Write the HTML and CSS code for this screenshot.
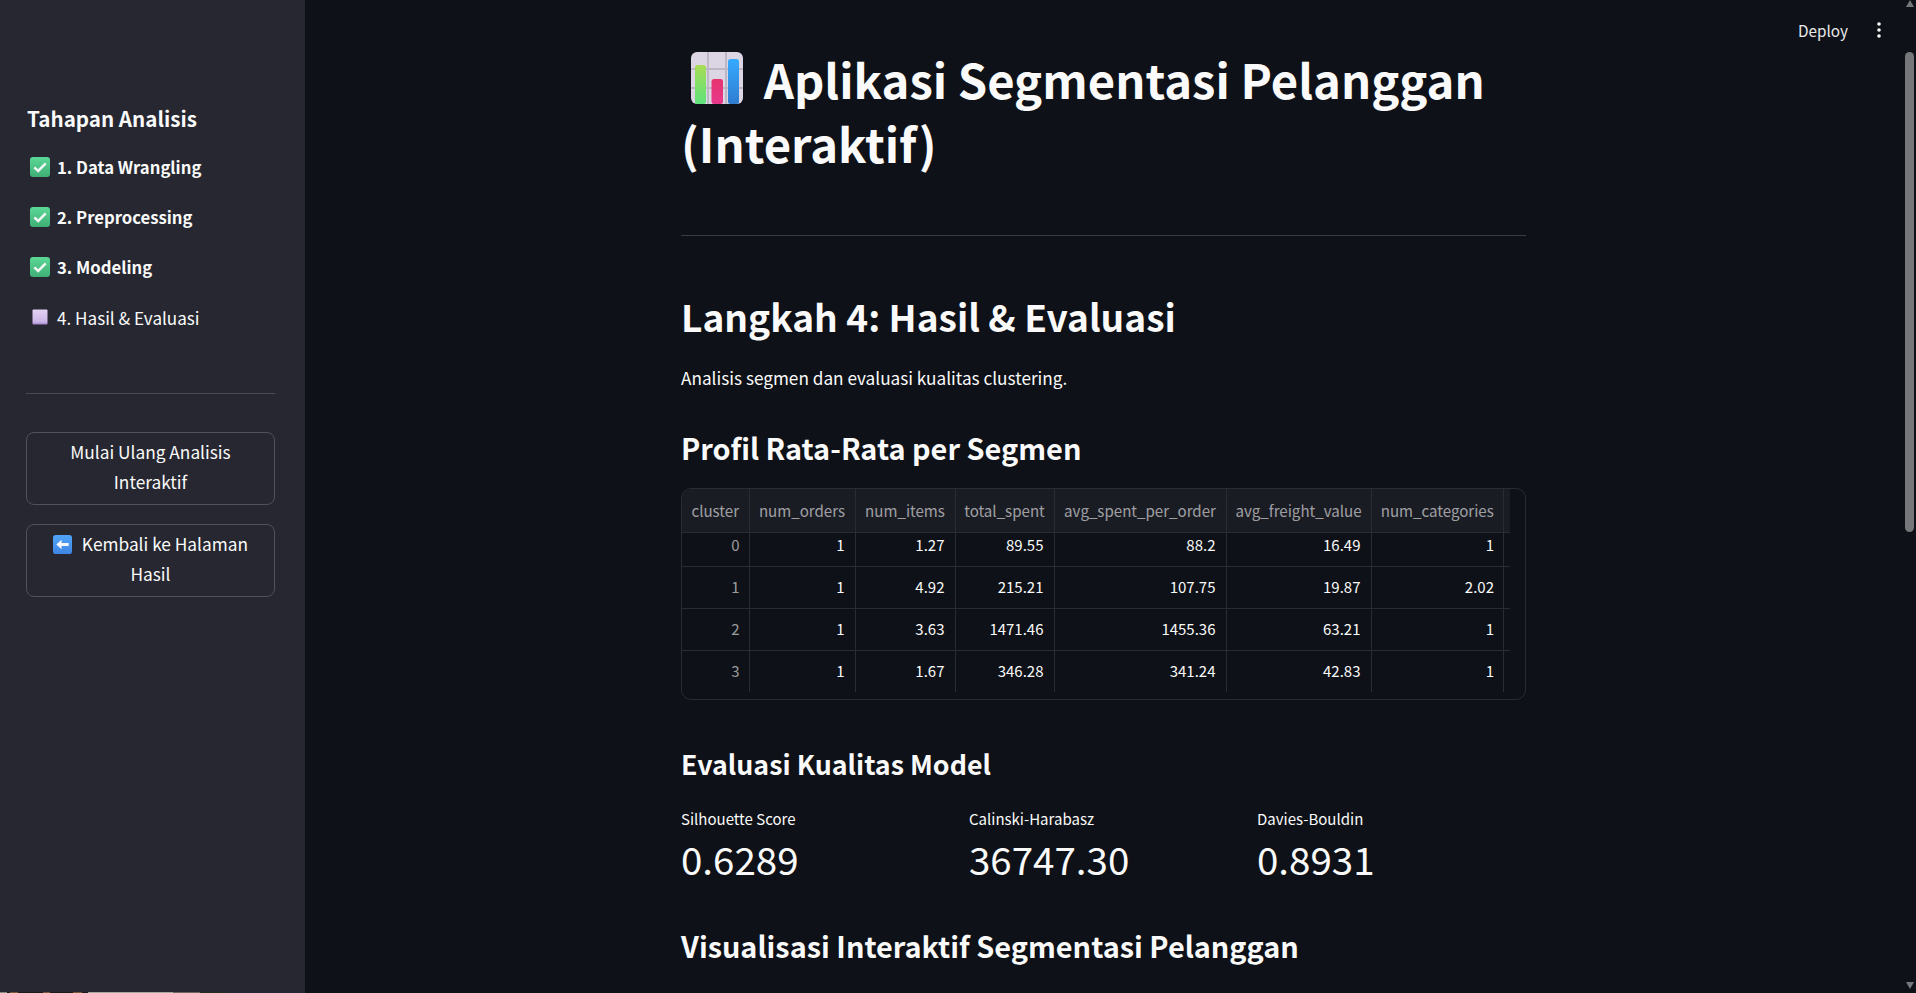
FILE: index.html
```html
<!DOCTYPE html>
<html lang="en">
<head>
  <meta charset="UTF-8">
  <meta name="viewport" content="width=device-width, initial-scale=1.0">
  <title>Aplikasi Segmentasi Pelanggan</title>
  <link rel="stylesheet" href="styles.css">
</head>
<body>
  <aside class="sidebar">
    <h2 class="side-title">Tahapan Analisis</h2>
    <ul class="steps">
      <li class="step done">
        <svg class="step-icon" viewBox="0 0 20 20"><defs><linearGradient id="green" x1="0" y1="0" x2="0" y2="1"><stop offset="0" stop-color="#5bd896"/><stop offset="1" stop-color="#3fae75"/></linearGradient></defs><rect width="20" height="20" rx="3" fill="url(#green)"/><path d="M4.3 10.3l3.9 3.7 7.5-7.6" fill="none" stroke="#f1f6f4" stroke-width="2.5"/></svg>
        1. Data Wrangling
      </li>
      <li class="step done">
        <svg class="step-icon" viewBox="0 0 20 20"><rect width="20" height="20" rx="3" fill="url(#green)"/><path d="M4.3 10.3l3.9 3.7 7.5-7.6" fill="none" stroke="#f1f6f4" stroke-width="2.5"/></svg>
        2. Preprocessing
      </li>
      <li class="step done">
        <svg class="step-icon" viewBox="0 0 20 20"><rect width="20" height="20" rx="3" fill="url(#green)"/><path d="M4.3 10.3l3.9 3.7 7.5-7.6" fill="none" stroke="#f1f6f4" stroke-width="2.5"/></svg>
        3. Modeling
      </li>
      <li class="step">
        <svg class="step-icon" viewBox="0 0 20 20"><defs><linearGradient id="lilac" x1="0" y1="0" x2="0" y2="1"><stop offset="0" stop-color="#e2d3f2"/><stop offset="0.8" stop-color="#cdb6e6"/><stop offset="1" stop-color="#a888cf"/></linearGradient></defs><rect x="2.5" y="2.5" width="15" height="15" rx="1" fill="url(#lilac)"/></svg>
        4. Hasil &amp; Evaluasi
      </li>
    </ul>
    <hr class="side-rule">
    <button class="side-btn">Mulai Ulang Analisis Interaktif</button>
    <button class="side-btn">
      <svg class="btn-icon" viewBox="0 0 20 20"><defs><linearGradient id="blue" x1="0" y1="0" x2="0" y2="1"><stop offset="0" stop-color="#50a4f8"/><stop offset="1" stop-color="#3f86e4"/></linearGradient></defs><rect width="20" height="20" rx="3" fill="url(#blue)"/><path d="M3.5 10l5.5-5v3.5h7.5v3H9V15z" fill="#f4f6fc"/></svg>
      Kembali ke Halaman Hasil
    </button>
  </aside>

  <main class="main">
    <div class="toolbar">
      <span class="deploy">Deploy</span>
      <svg class="dots" viewBox="0 0 6 18"><circle cx="3" cy="3" r="1.8"/><circle cx="3" cy="9" r="1.8"/><circle cx="3" cy="15" r="1.8"/></svg>
    </div>

    <div class="content">
      <h1 class="title">
        <svg class="title-icon" viewBox="0 0 52 52">
          <defs>
            <linearGradient id="bar-green" x1="0" y1="0" x2="0" y2="1"><stop offset="0" stop-color="#a8dc55"/><stop offset="1" stop-color="#5ee27c"/></linearGradient>
            <linearGradient id="bar-pink" x1="0" y1="0" x2="0" y2="1"><stop offset="0" stop-color="#e5336f"/><stop offset="1" stop-color="#e9388c"/></linearGradient>
            <linearGradient id="bar-blue" x1="0" y1="0" x2="0" y2="1"><stop offset="0" stop-color="#35aaff"/><stop offset="1" stop-color="#2f7cd0"/></linearGradient>
          </defs>
          <rect width="52" height="52" rx="6" fill="#dcd6e4"/>
          <path d="M0 17h52M0 36h52M17 0v52M35 0v52" stroke="#bdb6c4" stroke-width="2"/>
          <rect x="4" y="13" width="11" height="39" rx="2.5" fill="url(#bar-green)"/>
          <rect x="20.5" y="27" width="11.5" height="25" rx="2.5" fill="url(#bar-pink)"/>
          <rect x="37" y="7" width="11" height="45" rx="2.5" fill="url(#bar-blue)"/>
        </svg>
        Aplikasi Segmentasi Pelanggan (Interaktif)
      </h1>
      <hr class="rule">

      <h2 class="step-title">Langkah 4: Hasil &amp; Evaluasi</h2>
      <p class="lead">Analisis segmen dan evaluasi kualitas clustering.</p>

      <h3 class="section first">Profil Rata-Rata per Segmen</h3>
      <div class="table-frame">
        <table class="data">
          <thead>
            <tr>
              <th>cluster</th><th>num_orders</th><th>num_items</th><th>total_spent</th>
              <th>avg_spent_per_order</th><th>avg_freight_value</th><th>num_categories</th>
            </tr>
          </thead>
          <tbody>
            <tr class="row-clipped"><td class="idx">0</td><td>1</td><td>1.27</td><td>89.55</td><td>88.2</td><td>16.49</td><td>1</td></tr>
            <tr><td class="idx">1</td><td>1</td><td>4.92</td><td>215.21</td><td>107.75</td><td>19.87</td><td>2.02</td></tr>
            <tr><td class="idx">2</td><td>1</td><td>3.63</td><td>1471.46</td><td>1455.36</td><td>63.21</td><td>1</td></tr>
            <tr class="row-last"><td class="idx">3</td><td>1</td><td>1.67</td><td>346.28</td><td>341.24</td><td>42.83</td><td>1</td></tr>
          </tbody>
        </table>
      </div>

      <h3 class="section model">Evaluasi Kualitas Model</h3>
      <div class="metrics">
        <div class="metric"><div class="metric-label">Silhouette Score</div><div class="metric-value">0.6289</div></div>
        <div class="metric"><div class="metric-label">Calinski-Harabasz</div><div class="metric-value">36747.30</div></div>
        <div class="metric"><div class="metric-label">Davies-Bouldin</div><div class="metric-value">0.8931</div></div>
      </div>

      <h3 class="section viz">Visualisasi Interaktif Segmentasi Pelanggan</h3>
    </div>

    <div class="scroll-up"></div>
    <div class="scroll-thumb"></div>
    <div class="scroll-down"></div>
  </main>

  <div class="bottom-sliver"></div>
</body>
</html>
```
FILE: styles.css
```css
* {
  box-sizing: border-box;
}
html, body {
  height: 100%;
}
body {
  position: relative;
  margin: 0;
  display: flex;
  overflow: hidden;
  background-color: #0e1117;
  color: #fafafa;
  font-family: "Noto Sans CJK SC", "Noto Sans", sans-serif;
  font-size: 17px;
}

/* sidebar */
.sidebar {
  width: 305px;
  flex: none;
  height: 100%;
  padding: 100px 30px 0 26px;
  background-color: #262730;
}
.side-title {
  margin: 0 0 0 1px;
  font-size: 20.6px;
  line-height: 36px;
  font-weight: 700;
}
.steps {
  list-style: none;
  margin: 6px 0 0;
  padding: 0;
}
.step {
  display: flex;
  align-items: center;
  gap: 7px;
  height: 50px;
  padding-left: 4px;
  font-size: 17.1px;
}
.step.done {
  font-size: 16.7px;
  font-weight: 700;
}
.step-icon {
  width: 20px;
  height: 20px;
}
.side-rule {
  margin: 51px 0 38px;
  border: 0;
  border-top: 1px solid #4a4b55;
}
.side-btn {
  display: block;
  width: 100%;
  height: 73px;
  margin-bottom: 19px;
  padding: 0 16px 3px;
  background-color: #262730;
  color: #fafafa;
  border: 1px solid #50515b;
  border-radius: 8px;
  font-family: inherit;
  font-size: 17.3px;
  line-height: 30px;
}
.btn-icon {
  width: 19px;
  height: 19px;
  margin-right: 6px;
  vertical-align: -3px;
}

/* main column */
.main {
  flex: 1;
  position: relative;
  height: 100%;
  overflow: hidden;
}
.toolbar {
  position: absolute;
  top: 0;
  right: 34px;
  height: 60px;
  display: flex;
  align-items: center;
  gap: 28px;
}
.deploy {
  font-size: 15.3px;
  color: #e8e8e8;
}
.dots {
  width: 6px;
  height: 18px;
  fill: #fafafa;
}
.content {
  width: 845px;
  margin-left: 376px;
  padding-top: 47px;
}
.title {
  margin: 0;
  font-size: 47.2px;
  line-height: 64px;
  font-weight: 700;
}
.title-icon {
  width: 52px;
  height: 52px;
  margin: 0 10px 0 10px;
  vertical-align: -5px;
}
.rule {
  margin: 60px 0 0;
  border: 0;
  border-top: 1px solid #3a3c42;
}
.step-title {
  margin: 54px 0 0;
  font-size: 37.1px;
  line-height: 52px;
  font-weight: 700;
}
.lead {
  margin: 22px 0 0;
  font-size: 17.2px;
  line-height: 28px;
}
.section {
  margin: 0;
  font-size: 28.9px;
  line-height: 44px;
  font-weight: 700;
}
.first {
  margin-top: 33px;
}

/* table */
.table-frame {
  height: 212px;
  margin-top: 19px;
  border: 1px solid #2a2c33;
  border-radius: 10px;
  overflow: hidden;
}
.data {
  width: 828px;
  table-layout: fixed;
  border-collapse: collapse;
  font-size: 15px;
}
.data th:nth-child(1) { width: 67px; }
.data th:nth-child(2) { width: 106px; }
.data th:nth-child(3) { width: 100px; }
.data th:nth-child(4) { width: 99px; }
.data th:nth-child(5) { width: 172px; }
.data th:nth-child(6) { width: 145px; }
.data th:nth-child(7) { width: 139px; }
.data th {
  height: 43px;
  padding: 0 8px;
  background-color: #1a1c24;
  color: rgba(250, 250, 250, 0.6);
  font-size: 15.1px;
  font-weight: 400;
  text-align: center;
  border-right: 1px solid #2a2c33;
  border-bottom: 1px solid #2a2c33;
}
.data td {
  height: 42px;
  padding: 0 10px 2px;
  text-align: right;
  border-right: 1px solid #2a2c33;
  border-bottom: 1px solid #2a2c33;
}
/* last column stops 7px short of the table edge, the rows run on */
.data th:last-child, .data td:last-child {
  border-right: 0;
  background-image: linear-gradient(#2a2c33, #2a2c33);
  background-size: 1px 100%;
  background-position: 131px 0;
  background-repeat: no-repeat;
}
.data th:last-child {
  padding-right: 15px;
}
.data td:last-child {
  padding-right: 16px;
}
.data td.idx {
  padding-right: 9px;
  color: rgba(250, 250, 250, 0.6);
}
.row-clipped td {
  height: 34px;
  padding-bottom: 10px;
}
.row-last td {
  border-bottom: 0;
}

/* metrics */
.section.model {
  margin-top: 42px;
  font-size: 26.8px;
}
.metrics {
  display: grid;
  grid-template-columns: repeat(3, 1fr);
  gap: 19px;
  margin-top: 21px;
}
.metric-label {
  font-size: 15px;
  line-height: 23px;
}
.metric-value {
  font-size: 38.5px;
  line-height: 56px;
}
.viz {
  margin-top: 37px;
}

/* scrollbar */
.scroll-thumb {
  position: absolute;
  top: 52px;
  right: 2px;
  width: 9px;
  height: 480px;
  border-radius: 5px;
  background-color: #76777b;
}
.scroll-up, .scroll-down {
  position: absolute;
  right: 2px;
  width: 0;
  height: 0;
  border-left: 4.5px solid transparent;
  border-right: 4.5px solid transparent;
}
.scroll-up {
  top: 0;
  border-bottom: 7px solid #76777b;
}
.scroll-down {
  bottom: 4px;
  border-top: 7px solid #76777b;
}

/* one row of something else showing under the window */
.bottom-sliver {
  position: absolute;
  left: 0;
  bottom: 0;
  width: 225px;
  height: 1px;
  background: linear-gradient(90deg, #8a8a80 0 7px, #1c1a18 7px 10px, #7a5a38 10px 18px, #1c1a18 18px 43px, #7a5a38 43px 50px, #1c1a18 50px 73px, #7a5a38 73px 82px, #1c1a18 82px 88px, #a8a89c 88px 173px, #6c6a5c 173px 200px, #2a2a24 200px 225px);
}
```
